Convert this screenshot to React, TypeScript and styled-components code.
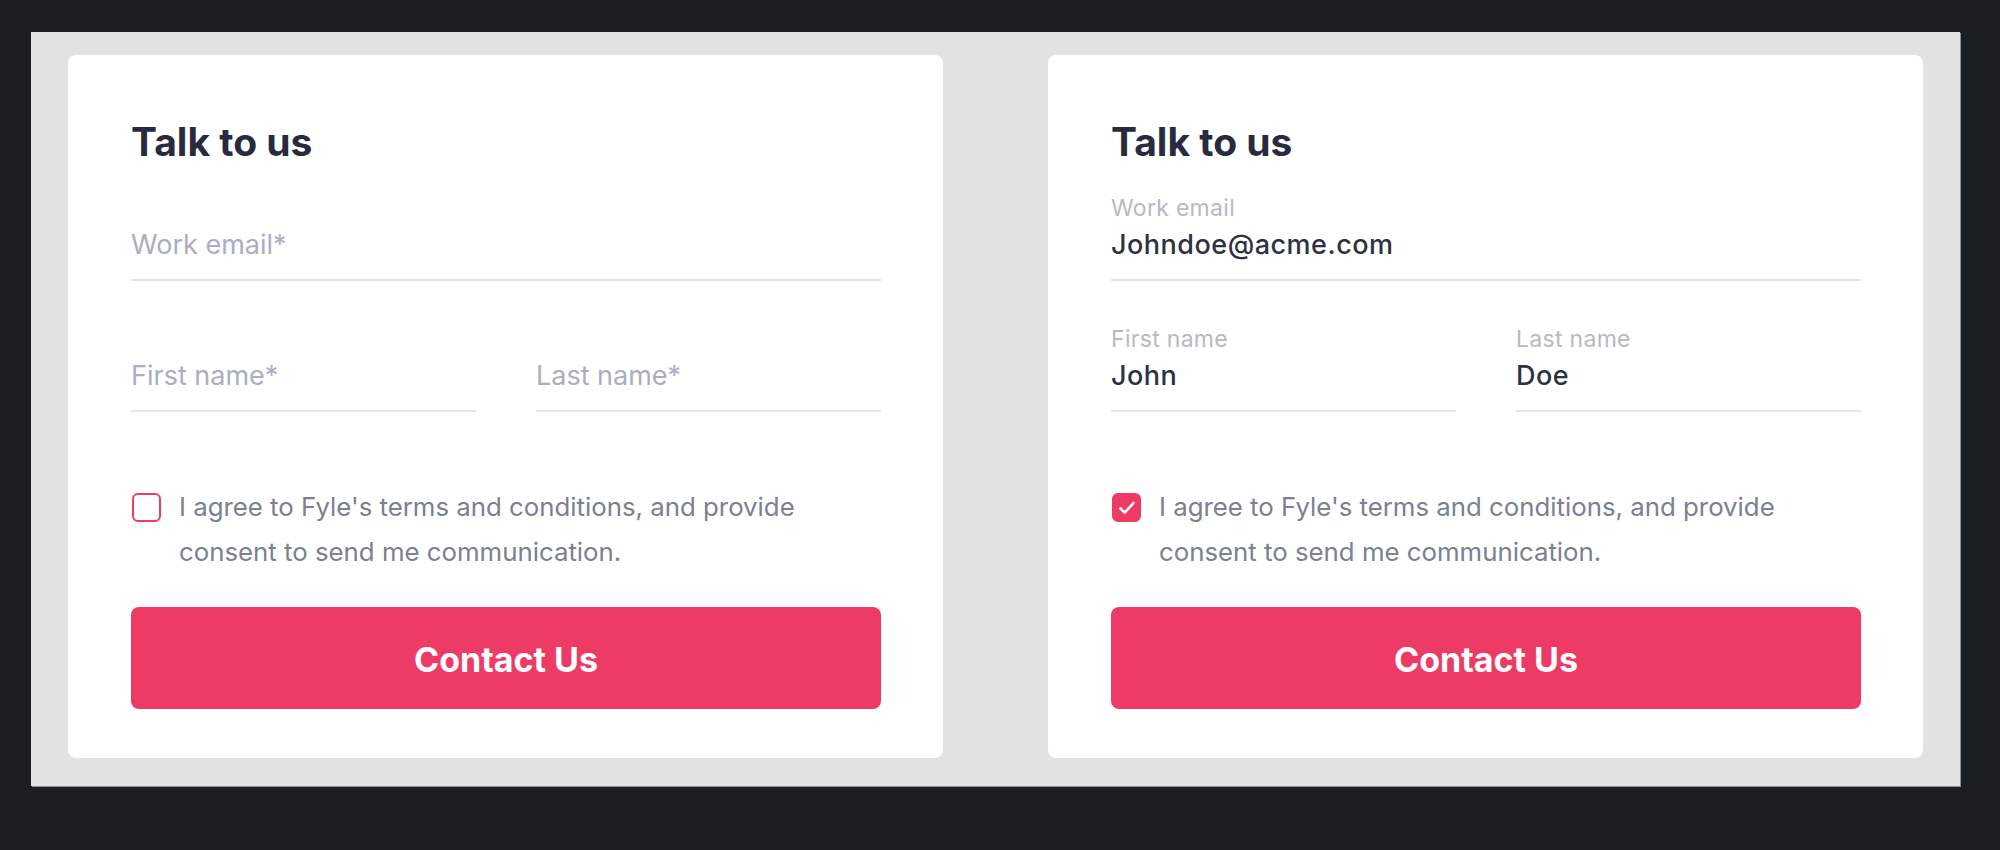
import React, { useState } from "react";
import styled, { createGlobalStyle } from "styled-components";

// form values shown on each card
interface FormValues {
  email: string;
  firstName: string;
  lastName: string;
  agreed: boolean;
}

const FORMS: FormValues[] = [
  { email: "", firstName: "", lastName: "", agreed: false },
  { email: "Johndoe@acme.com", firstName: "John", lastName: "Doe", agreed: true },
];

interface FieldProps {
  label: string;
  value: string;
  onChange: (value: string) => void;
}

const Field = ({ label, value, onChange }: FieldProps) => (
  <FieldWrap>
    <FieldLabel $visible={value.length > 0}>{label}</FieldLabel>
    <FieldInput
      value={value}
      placeholder={`${label}*`}
      onChange={(e) => onChange(e.target.value)}
    />
  </FieldWrap>
);

const ContactCard = ({ initial }: { initial: FormValues }) => {
  const [form, setForm] = useState<FormValues>(initial);

  const update = (key: keyof FormValues) => (value: string) =>
    setForm((prev) => ({ ...prev, [key]: value }));

  return (
    <Card>
      <Title>Talk to us</Title>
      <EmailRow>
        <Field label="Work email" value={form.email} onChange={update("email")} />
      </EmailRow>
      <NameRow>
        <Field label="First name" value={form.firstName} onChange={update("firstName")} />
        <Field label="Last name" value={form.lastName} onChange={update("lastName")} />
      </NameRow>
      <Consent onClick={() => setForm((prev) => ({ ...prev, agreed: !prev.agreed }))}>
        <CheckBox $checked={form.agreed}>
          {form.agreed && (
            <svg width="24" height="24" viewBox="0 0 24 24" fill="none">
              <path
                d="M5.5 12.5l4.2 4.2L18.5 7"
                stroke="#ffffff"
                strokeWidth="2.6"
                strokeLinecap="round"
                strokeLinejoin="round"
              />
            </svg>
          )}
        </CheckBox>
        <ConsentText>
          I agree to Fyle's terms and conditions, and provide consent to send me
          communication.
        </ConsentText>
      </Consent>
      <SubmitButton type="button">Contact Us</SubmitButton>
    </Card>
  );
};

const App = () => (
  <>
    <GlobalStyle />
    <Page>
      <Panel>
        {FORMS.map((form, i) => (
          <ContactCard key={i} initial={form} />
        ))}
      </Panel>
    </Page>
  </>
);

const GlobalStyle = createGlobalStyle`
  html, body {
    margin: 0;
    padding: 0;
    background: #1b1e23;
  }
  body {
    font-family: Inter, "Noto Sans", sans-serif;
  }
`;

const Page = styled.div`
  min-height: 850px;
  padding: 32px 40px 0 31px;
  box-sizing: border-box;
  background: #1b1e23;
`;

const Panel = styled.div`
  width: 1929px;
  box-sizing: border-box;
  display: grid;
  grid-template-columns: 875px 875px;
  column-gap: 105px;
  padding: 23px 37px 28px 37px;
  background: #e2e2e2;
  box-shadow: 1px 1px 0 #8f9094;
`;

const Card = styled.div`
  display: flex;
  flex-direction: column;
  padding: 63px 62px 49px 63px;
  background: #ffffff;
  border-radius: 8px;
`;

const Title = styled.h2`
  margin: 0;
  font-size: 39px;
  line-height: 48px;
  font-weight: 700;
  color: #272b3d;
`;

const EmailRow = styled.div`
  margin-top: 28px;
`;

const NameRow = styled.div`
  display: grid;
  grid-template-columns: minmax(0, 1fr) minmax(0, 1fr);
  column-gap: 60px;
  margin-top: 44px;
`;

const FieldWrap = styled.div`
  display: flex;
  flex-direction: column;
  min-width: 0;
  padding-bottom: 16px;
  border-bottom: 2px solid #e3e3ea;
`;

const FieldLabel = styled.span<{ $visible: boolean }>`
  font-size: 23px;
  line-height: 28px;
  letter-spacing: 0.3px;
  color: #b7b8c8;
  visibility: ${({ $visible }) => ($visible ? "visible" : "hidden")};
`;

const FieldInput = styled.input`
  width: 100%;
  min-width: 0;
  margin-top: 5px;
  padding: 0;
  border: none;
  outline: none;
  height: 36px;
  font-family: Inter, "Noto Sans", sans-serif;
  font-size: 27px;
  line-height: 36px;
  font-weight: 500;
  letter-spacing: 0.5px;
  color: #2e3142;
  background: transparent;

  &::placeholder {
    font-weight: 400;
    letter-spacing: 0;
    color: #abadc2;
  }
`;

const Consent = styled.label`
  display: flex;
  align-items: flex-start;
  gap: 18px;
  margin-top: 72px;
  cursor: pointer;
`;

const CheckBox = styled.span<{ $checked: boolean }>`
  flex: none;
  display: flex;
  align-items: center;
  justify-content: center;
  width: 29px;
  height: 29px;
  margin: 9px 0 0 1px;
  box-sizing: border-box;
  border-radius: 6px;
  border: 2.5px solid #ee3b65;
  background: ${({ $checked }) => ($checked ? "#ee3b65" : "#ffffff")};
`;

const ConsentText = styled.span`
  font-size: 25.8px;
  line-height: 45px;
  color: #7b8093;
  max-width: 680px;
`;

const SubmitButton = styled.button`
  margin-top: 33px;
  height: 102px;
  border: none;
  border-radius: 8px;
  background: #ee3b65;
  color: #ffffff;
  font-family: Inter, "Noto Sans", sans-serif;
  font-size: 34px;
  line-height: 40px;
  font-weight: 700;
  padding: 3px 0 0;
  cursor: pointer;
`;

export default App;
